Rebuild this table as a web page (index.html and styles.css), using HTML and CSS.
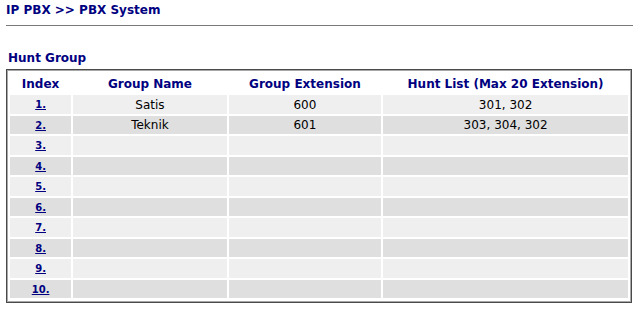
FILE: index.html
```html
<!DOCTYPE html>
<html>
<head>
<meta charset="utf-8">
<link rel="stylesheet" href="styles.css">
</head>
<body>
<div class="page">
  <h1 class="title">IP PBX &gt;&gt; PBX System</h1>
  <hr class="rule">
  <h2 class="section">Hunt Group</h2>
  <table class="grid">
    <thead>
      <tr>
        <th class="c-idx">Index</th>
        <th class="c-name">Group Name</th>
        <th class="c-ext">Group Extension</th>
        <th class="c-list">Hunt List (Max 20 Extension)</th>
      </tr>
    </thead>
    <tbody>
      <tr class="odd"><td><a href="#">1.</a></td><td>Satis</td><td>600</td><td>301, 302</td></tr>
      <tr class="even"><td><a href="#">2.</a></td><td>Teknik</td><td>601</td><td>303, 304, 302</td></tr>
      <tr class="odd"><td><a href="#">3.</a></td><td></td><td></td><td></td></tr>
      <tr class="even"><td><a href="#">4.</a></td><td></td><td></td><td></td></tr>
      <tr class="odd"><td><a href="#">5.</a></td><td></td><td></td><td></td></tr>
      <tr class="even"><td><a href="#">6.</a></td><td></td><td></td><td></td></tr>
      <tr class="odd"><td><a href="#">7.</a></td><td></td><td></td><td></td></tr>
      <tr class="even"><td><a href="#">8.</a></td><td></td><td></td><td></td></tr>
      <tr class="odd"><td><a href="#">9.</a></td><td></td><td></td><td></td></tr>
      <tr class="even"><td><a href="#">10.</a></td><td></td><td></td><td></td></tr>
    </tbody>
  </table>
</div>
</body>
</html>
```
FILE: styles.css
```css
html, body {
  margin: 0;
  padding: 0;
  background: #ffffff;
}

body {
  font-family: "DejaVu Sans", Verdana, sans-serif;
  color: #000000;
}

.page {
  padding: 3px 6px 0 6px;
}

.title {
  margin: 0;
  font-size: 12px;
  line-height: 14px;
  font-weight: bold;
  color: #000080;
}

.rule {
  width: 627px;
  height: 0;
  margin: 8px 0 0 0;
  border: 0;
  border-top: 1px solid #7a7a7a;
}

.section {
  margin: 25px 0 0 2px;
  font-size: 12px;
  line-height: 14px;
  font-weight: bold;
  color: #000080;
}

.grid {
  margin-top: 4px;
  width: 626px;
  border: 1px solid #4a4a4a;
  box-shadow: inset 0 0 0 1px #a8a8a8;
  padding: 1px 1px 2px 1px;
  border-collapse: separate;
  border-spacing: 2px;
  table-layout: fixed;
}

.grid th {
  box-sizing: border-box;
  height: 20px;
  padding: 2px 0 0 0;
  font-size: 12px;
  font-weight: bold;
  color: #000080;
  text-align: center;
  vertical-align: middle;
}

.c-idx { width: 61px; }
.c-name { width: 153px; }
.c-ext { width: 152px; }
.c-list { width: 244px; }

.grid td {
  box-sizing: border-box;
  padding: 0;
  font-size: 12px;
  line-height: 14px;
  text-align: center;
  vertical-align: middle;
}

.odd td { height: 19px; background: #efefef; }
.even td { height: 18px; background: #dfdfdf; }

.grid a {
  font-size: 10px;
  font-weight: bold;
  color: #000080;
  text-decoration: underline;
}
```
